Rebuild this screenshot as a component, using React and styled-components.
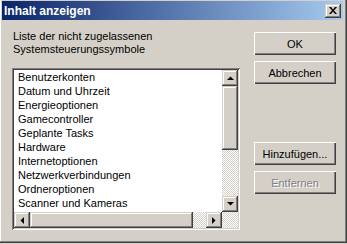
import React from "react"
import styled, { createGlobalStyle } from "styled-components"

const GlobalStyle = createGlobalStyle`
  html, body {
    margin: 0;
    padding: 0;
    background: #d4d0c8;
  }
  body {
    font-family: Tahoma, "Liberation Sans", Arial, sans-serif;
    font-size: 11px;
  }
`

const items = [
    "Benutzerkonten",
    "Datum und Uhrzeit",
    "Energieoptionen",
    "Gamecontroller",
    "Geplante Tasks",
    "Hardware",
    "Internetoptionen",
    "Netzwerkverbindungen",
    "Ordneroptionen",
    "Scanner und Kameras",
    "Schriftarten",
]

const raised = `
    box-shadow: inset -1px -1px #404040, inset 1px 1px #d4d0c8,
        inset -2px -2px #808080, inset 2px 2px #ffffff;
`

function Arrow({ dir }) {
    const pts = {
        up: "0,4 7,4 3.5,0.5",
        down: "0,0 7,0 3.5,3.5",
        left: "4,0 4,7 0.5,3.5",
        right: "0,0 0,7 3.5,3.5",
    }[dir]
    const vertical = dir === "up" || dir === "down"
    return (
        <svg width={vertical ? 7 : 4} height={vertical ? 4 : 7}>
            <polygon points={pts} fill="#000" />
        </svg>
    )
}

export default function App() {
    return (
        <Window>
            <GlobalStyle />
            <TitleBar>
                <Title>Inhalt anzeigen</Title>
                <CloseButton>
                    <svg width="8" height="7" viewBox="0 0 8 7">
                        <path d="M0 0h2l2 2.5L6 0h2L5 3.5 8 7H6L4 4.5 2 7H0l3-3.5z" fill="#000" />
                    </svg>
                </CloseButton>
            </TitleBar>
            <Body>
                <Left>
                    <Caption>
                        Liste der nicht zugelassenen<br />
                        Systemsteuerungssymbole
                    </Caption>
                    <ListBox>
                        <Items>
                            {items.map(x => <Item key={x}>{x}</Item>)}
                        </Items>
                        <VScroll>
                            <ScrollButton><Arrow dir="up" /></ScrollButton>
                            <Thumb size={64} />
                            <Track />
                            <ScrollButton><Arrow dir="down" /></ScrollButton>
                        </VScroll>
                        <HScroll>
                            <ScrollButton><Arrow dir="left" /></ScrollButton>
                            <Thumb size={163} />
                            <Track />
                            <ScrollButton><Arrow dir="right" /></ScrollButton>
                        </HScroll>
                        <Track />
                    </ListBox>
                </Left>
                <Right>
                    <Button>OK</Button>
                    <Button>Abbrechen</Button>
                    <Button gap={58}>Hinzufügen...</Button>
                    <Button disabled>Entfernen</Button>
                </Right>
            </Body>
        </Window>
    )
}

const Window = styled.div`
    width: 347px;
    height: 243px;
    box-sizing: border-box;
    padding: 1px 4px 4px 2px;
    background: #d4d0c8;
    box-shadow: inset -1px -1px #404040, inset -2px -2px #808080,
        inset 1px 0 #ffffff;
    display: flex;
    flex-direction: column;
`
const TitleBar = styled.div`
    height: 19px;
    flex: none;
    display: flex;
    align-items: center;
    justify-content: space-between;
    padding: 0 2px 0 2px;
    background: linear-gradient(to right, #0a246a, #a6caf0);
`
const Title = styled.span`
    color: #ffffff;
    font-weight: bold;
    font-size: 12px;
    padding-top: 1px;
`
const CloseButton = styled.div`
    width: 16px;
    height: 14px;
    box-sizing: border-box;
    display: flex;
    align-items: center;
    justify-content: center;
    background: #d4d0c8;
    ${raised}
`
const Body = styled.div`
    display: flex;
    gap: 14px;
    padding: 0 0 0 10px;
`
const Left = styled.div`
    width: 228px;
    padding-top: 10px;
`
const Caption = styled.div`
    line-height: 13px;
    margin-left: 1px;
    color: #000;
`
const ListBox = styled.div`
    margin-top: 12px;
    width: 228px;
    height: 162px;
    box-sizing: border-box;
    padding: 2px;
    background: #ffffff;
    box-shadow: inset 1px 1px #808080, inset -1px -1px #ffffff,
        inset 2px 2px #404040, inset -2px -2px #d4d0c8;
    display: grid;
    grid-template-columns: 1fr 16px;
    grid-template-rows: 1fr 16px;
`
const Items = styled.div`
    overflow: hidden;
    padding: 0 0 0 4px;
`
const Item = styled.div`
    line-height: 14px;
    white-space: nowrap;
    color: #000;
`
const VScroll = styled.div`
    display: flex;
    flex-direction: column;
`
const HScroll = styled.div`
    display: flex;
`
const ScrollButton = styled.div`
    width: 16px;
    height: 16px;
    flex: none;
    box-sizing: border-box;
    display: flex;
    align-items: center;
    justify-content: center;
    background: #d4d0c8;
    ${raised}
`
const Thumb = styled.div`
    flex: none;
    flex-basis: ${p => p.size}px;
    min-width: 16px;
    min-height: 16px;
    background: #d4d0c8;
    ${raised}
`
const Track = styled.div`
    flex: 1;
    background: repeating-conic-gradient(#ffffff 0 25%, #d4d0c8 0 50%) 0 0 / 2px 2px;
`
const Right = styled.div`
    width: 82px;
    padding-top: 12px;
    display: flex;
    flex-direction: column;
    gap: 6px;
`
const Button = styled.div`
    height: 23px;
    margin-top: ${p => (p.gap ? p.gap - 6 : 0)}px;
    box-sizing: border-box;
    display: flex;
    align-items: center;
    justify-content: center;
    background: #d4d0c8;
    color: ${p => (p.disabled ? "#808080" : "#000")};
    text-shadow: ${p => (p.disabled ? "1px 1px #ffffff" : "none")};
    box-shadow: inset 1px 1px #ffffff, inset -1px -1px #404040,
        inset -2px -2px #808080;
`
